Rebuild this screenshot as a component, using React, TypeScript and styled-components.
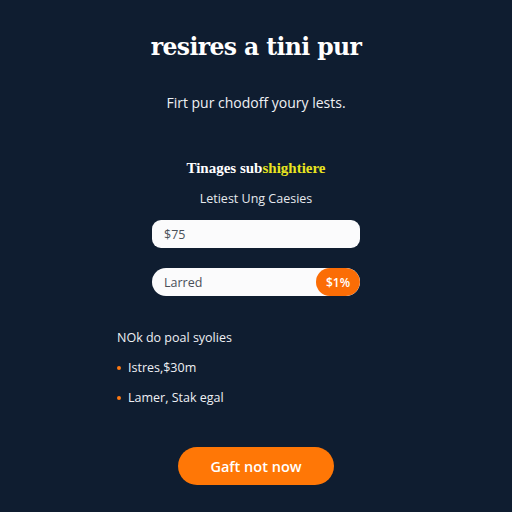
import React from "react";
import styled, { createGlobalStyle } from "styled-components";

const GlobalStyle = createGlobalStyle`
  html, body {
    margin: 0;
    padding: 0;
    background: #0f1d30;
  }
  body {
    font-family: "Open Sans", "Liberation Sans", sans-serif;
  }
`;

const Page = styled.div`
  width: 512px;
  height: 512px;
  box-sizing: border-box;
  background: #0f1d30;
  display: flex;
  flex-direction: column;
  align-items: center;
  padding-top: 30px;
  color: #f1f3f6;
`;

const Title = styled.h1`
  margin: 0;
  font-family: "DejaVu Serif", "Liberation Serif", serif;
  font-weight: 700;
  font-size: 23.5px;
  line-height: 34px;
  letter-spacing: -0.6px;
  color: #ffffff;
`;

const Lead = styled.p`
  margin: 29px 0 0;
  font-size: 14px;
  line-height: 20px;
  color: #eef0f4;
`;

const Section = styled.div`
  margin-top: 45px;
  display: flex;
  flex-direction: column;
  align-items: center;
  width: 208px;
`;

const SectionTitle = styled.h2`
  margin: 0;
  font-family: "Liberation Serif", serif;
  font-weight: 700;
  font-size: 15px;
  line-height: 20px;
  color: #ffffff;
`;

const Highlight = styled.span`
  color: #e9e41f;
`;

const Caption = styled.p`
  margin: 12px 0 0;
  font-size: 12.5px;
  line-height: 17px;
  color: #e6e9ee;
`;

const Field = styled.div<{ $pill?: boolean }>`
  width: 100%;
  height: 28px;
  margin-top: ${({ $pill }) => ($pill ? "20px" : "13px")};
  background: #fbfbfc;
  border-radius: ${({ $pill }) => ($pill ? "14px" : "9px")};
  display: flex;
  align-items: center;
  justify-content: space-between;
  overflow: hidden;
  box-sizing: border-box;
  padding-left: 12px;
  font-size: 12.5px;
  color: #4a4f58;
`;

const Badge = styled.span`
  height: 100%;
  width: 44px;
  border-radius: 14px;
  background: #fb6d06;
  color: #fff;
  display: flex;
  align-items: center;
  justify-content: center;
  font-size: 12px;
  font-weight: 600;
`;

const List = styled.div`
  align-self: flex-start;
  margin: 33px 0 0 117px;
  display: flex;
  flex-direction: column;
  gap: 13px;
  font-size: 12.5px;
  line-height: 17px;
  color: #eef0f4;
`;

const ListHead = styled.div``;

const Item = styled.div`
  display: flex;
  align-items: center;
  gap: 7px;
  &::before {
    content: "";
    width: 4px;
    height: 4px;
    border-radius: 50%;
    background: #ff7a12;
  }
`;

const Cta = styled.button`
  margin-top: 41px;
  width: 156px;
  height: 38px;
  border: none;
  border-radius: 19px;
  background: #ff7706;
  color: #fff;
  font-family: "Open Sans", "Liberation Sans", sans-serif;
  font-weight: 600;
  font-size: 14.5px;
  cursor: pointer;
`;

export default function App() {
  return (
    <>
      <GlobalStyle />
      <Page>
        <Title>resires a tini pur</Title>
        <Lead>Firt pur chodoff youry lests.</Lead>
        <Section>
          <SectionTitle>
            Tinages sub<Highlight>shightiere</Highlight>
          </SectionTitle>
          <Caption>Letiest Ung Caesies</Caption>
          <Field>$75</Field>
          <Field $pill>
            Larred
            <Badge>$1%</Badge>
          </Field>
        </Section>
        <List>
          <ListHead>NOk do poal syolies</ListHead>
          <Item>Istres,$30m</Item>
          <Item>Lamer, Stak egal</Item>
        </List>
        <Cta>Gaft not now</Cta>
      </Page>
    </>
  );
}
